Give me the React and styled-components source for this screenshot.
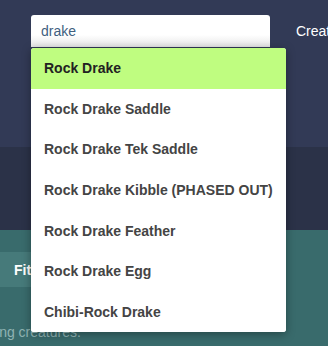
import React from "react"
import styled, { createGlobalStyle } from "styled-components"

const items = [
  "Rock Drake",
  "Rock Drake Saddle",
  "Rock Drake Tek Saddle",
  "Rock Drake Kibble (PHASED OUT)",
  "Rock Drake Feather",
  "Rock Drake Egg",
  "Chibi-Rock Drake",
]

const App = () => {
  return (
    <Page>
      <GlobalStyle />
      <Header>
        <Search>
          <SearchInput defaultValue="drake" />
          <Dropdown>
            {items.map((item, i) => (
              <Option key={item} active={i === 0}>
                {item}
              </Option>
            ))}
          </Dropdown>
        </Search>
        <NavLink>Create</NavLink>
      </Header>
      <Band />
      <Content>
        <TabBar>
          <Tab>Fittings</Tab>
        </TabBar>
        <Note>Showing creatures.</Note>
      </Content>
    </Page>
  )
}

export default App

const GlobalStyle = createGlobalStyle`
  html, body {
    margin: 0;
    padding: 0;
    background: #396b6c;
    overflow: hidden;
  }
  body {
    font-family: "Liberation Sans", Arial, sans-serif;
  }
`

const Page = styled.div`
  width: 328px;
  height: 346px;
  overflow: hidden;
  display: flex;
  flex-direction: column;
`

const Header = styled.header`
  height: 147px;
  box-sizing: border-box;
  background: #323a56;
  padding: 15px 0 0 31px;
  display: flex;
  align-items: flex-start;
  gap: 26px;
  white-space: nowrap;
  position: relative;
  z-index: 2;
`

const Search = styled.div`
  position: relative;
  width: 239px;
  flex-shrink: 0;
`

const SearchInput = styled.input`
  display: block;
  width: 100%;
  height: 32px;
  box-sizing: border-box;
  border: none;
  border-radius: 3px 3px 0 0;
  padding: 0 10px;
  font-family: "Liberation Sans", Arial, sans-serif;
  font-size: 14px;
  color: #3f5f7f;
  background: linear-gradient(to bottom, #ffffff 0%, #ffffff 62%, #e6e6e6 100%);
  outline: none;
`

const Dropdown = styled.ul`
  position: absolute;
  top: 33px;
  left: 0;
  width: 255px;
  margin: 0;
  padding: 0;
  list-style: none;
  background: #fff;
  border-radius: 3px;
  overflow: hidden;
  box-shadow: 0 2px 10px rgba(0, 0, 0, 0.35);
`

const Option = styled.li`
  height: 40.57px;
  display: flex;
  align-items: center;
  padding: 0 13px;
  font-size: 14px;
  font-weight: bold;
  color: ${props => (props.active ? "#222" : "#444")};
  background: ${props => (props.active ? "#bffd80" : "#fff")};
`

const NavLink = styled.a`
  color: #fff;
  font-size: 14px;
  line-height: 32px;
`

const Band = styled.div`
  height: 83px;
  background: #2b3248;
`

const Content = styled.section`
  flex: 1;
  background: #396b6c;
  padding-top: 22px;
`

const TabBar = styled.div`
  width: 140px;
  height: 35px;
  background: #467a7a;
  display: flex;
  align-items: center;
  padding-left: 14px;
  box-sizing: border-box;
`

const Tab = styled.span`
  color: #fff;
  font-size: 14px;
  font-weight: bold;
`

const Note = styled.p`
  margin: 37px 0 0 -39px;
  font-size: 14px;
  line-height: 16px;
  color: #8fb3b3;
  white-space: nowrap;
`
